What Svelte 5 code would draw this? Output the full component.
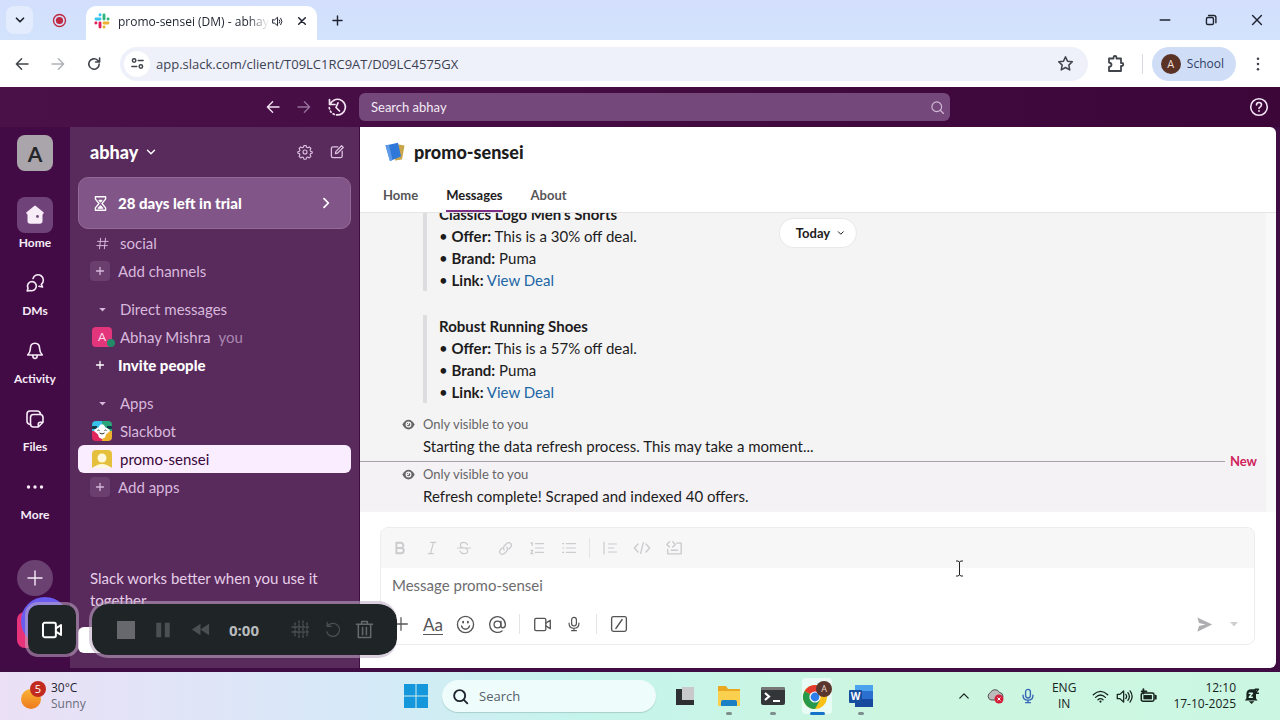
<script>
	let search = '';
	let url = 'app.slack.com/client/T09LC1RC9AT/D09LC4575GX';
	let taskSearch = '';
	let message = '';
	let activeTab = 'Messages';

	const tabs = ['Home', 'Messages', 'About'];

	const rail = [
		{ label: 'Home', icon: 'home' },
		{ label: 'DMs', icon: 'dms' },
		{ label: 'Activity', icon: 'bell' },
		{ label: 'Files', icon: 'files' },
		{ label: 'More', icon: 'more' }
	];

	const deals = [
		{ name: "Classics Logo Men's Shorts", offer: 'This is a 30% off deal.', brand: 'Puma' },
		{ name: 'Robust Running Shoes', offer: 'This is a 57% off deal.', brand: 'Puma' }
	];

	const notices = [
		{ text: 'Starting the data refresh process. This may take a moment...', isNew: false },
		{ text: 'Refresh complete! Scraped and indexed 40 offers.', isNew: true }
	];

	// all on a 20x20 grid, stroked with currentColor
	const icons = {
		chevronDown: '<path d="M5 7.5l5 5 5-5"/>',
		chevronUp: '<path d="M4 13l6-6 6 6"/>',
		chevronRight: '<path d="M7.5 4.5L13 10l-5.5 5.5"/>',
		caret: '<path d="M5 7.5h10l-5 5.5z" fill="currentColor" stroke="none"/>',
		record:
			'<circle cx="10" cy="10" r="8"/><circle cx="10" cy="10" r="4.8" fill="currentColor" stroke="none"/>',
		speaker:
			'<path d="M2.5 7.5v5h3l4.5 4V3.500l-4.500 4zM12.800 7.500q2 2.500 0 5M15 5q4 5 0 10"/>',
		close: '<path d="M4.500 4.500l11 11M15.500 4.500l-11 11"/>',
		plus: '<path d="M10 3v14M3 10h14"/>',
		minimize: '<path d="M4 10h12"/>',
		restore:
			'<rect x="3.500" y="6.500" width="10" height="10" rx="2"/><path d="M6.500 3.500H14a3 3 0 0 1 3 3V14"/>',
		left: '<path d="M17.500 10H3M9.500 3.500L3 10l6.500 6.500"/>',
		right: '<path d="M2.500 10H17M10.500 3.500L17 10l-6.500 6.500"/>',
		reload: '<path d="M16.500 10A6.500 6.500 0 1 1 14.500 5.300L17 7.500M17 2.500v5h-5"/>',
		site:
			'<circle cx="5.500" cy="6" r="2.300"/><path d="M11 6h6.500M2.500 14H9"/><circle cx="14.500" cy="14" r="2.300"/>',
		star: '<path d="M10 2.200l2.400 5.100 5.600.7-4.100 3.900 1.100 5.600-5-2.800-5 2.800 1.100-5.600L2 8l5.600-.7z"/>',
		puzzle:
			'<path d="M3 4.500h4.500v-1a1.500 1.500 0 0 1 3 0v1h4.500V9h.8a1.500 1.500 0 0 1 0 3H15v5H3v-4q2.500-.5 2.500-2.200T3 8.500z"/>',
		dots:
			'<g fill="currentColor" stroke="none"><circle cx="10" cy="3.500" r="1.600"/><circle cx="10" cy="10" r="1.600"/><circle cx="10" cy="16.500" r="1.600"/></g>',
		history: '<path d="M2.500 2.500v5H8M3.200 7.500A7.800 7.800 0 1 1 9.500 17.800M11 5.800L9 10.500l3.500 3.500"/><path d="M2.300 10.500q.8 5.500 5.200 7" stroke-dasharray="1.200 2.600"/>',
		search: '<circle cx="9" cy="9" r="6.500"/><path d="M14 14l4 4"/>',
		help:
			'<circle cx="10" cy="10" r="8.300"/><path d="M7.500 8q0-2.500 2.500-2.500T12.500 8q0 1-1.200 1.800T10 11.500"/><circle cx="10" cy="14" r=".9" fill="currentColor" stroke="none"/>',
		gear:
			'<circle cx="10" cy="10" r="2.500"/><path d="M8.600 2h2.800l.5 2 1.600.7 1.900-1.100 2 2-1.100 1.900.7 1.600 2 .5v1.800l-2 .5-.7 1.600 1.100 1.900-2 2-1.900-1.100-1.600.7-.5 2H8.600l-.5-2-1.600-.7-1.900 1.100-2-2 1.100-1.900-.7-1.600-2-.5V9.600l2-.5.7-1.600-1.100-1.900 2-2 1.900 1.100L8.100 4z"/>',
		compose:
			'<path d="M11 3.500H5a2 2 0 0 0-2 2V15a2 2 0 0 0 2 2h9.500a2 2 0 0 0 2-2V9"/><path d="M8 12l.7-2.800 7-7 2.100 2.100-7 7z"/>',
		hourglass:
			'<path d="M4 2h12v2.800L11.700 10l4.300 5.200V18H4v-2.800L8.300 10 4 4.800z"/><path d="M7.500 15.500L10 13l2.500 2.500zM8.500 6.500h3L10 8z" fill="currentColor"/>',
		hash: '<path d="M7.500 3L6 17M14 3l-1.500 14M3.500 7.200h14M2.500 12.800h14"/>',
		home:
			'<path d="M10 1.500l8 6.300-1.300 1.600V16a2 2 0 0 1-2 2H5.300a2 2 0 0 1-2-2V9.400L2 7.800z" fill="currentColor"/><circle cx="12.500" cy="11.500" r="1.400" fill="#6f4a78" stroke="none"/>',
		dms:
			'<path d="M8 5.500A5.300 5.300 0 1 1 16.300 11.300l1.200 2.700-3.500-.7"/><path d="M7 8.500a4.600 4.600 0 1 1-1.600 9l-3.200.5.800-2.800A4.600 4.600 0 0 1 7 8.500z"/>',
		bell:
			'<path d="M10 2.200c-3.200 0-4.600 2.300-4.600 5.200 0 3-1 4.600-2.700 6.600h14.600c-1.700-2-2.700-3.600-2.700-6.600 0-2.900-1.400-5.200-4.600-5.200zM7.800 14.500q0 3 2.200 3t2.200-3"/>',
		files:
			'<path d="M5.500 15.500Q2 15 2 12V5a3 3 0 0 1 3-3h7q3 0 3.500 3"/><path d="M8.500 5.500h6.500a3 3 0 0 1 3 3v4.800L13.300 18H8.500a3 3 0 0 1-3-3V8.500a3 3 0 0 1 3-3zM17.800 13.300h-2.500a2 2 0 0 0-2 2v2.500"/>',
		more:
			'<g fill="currentColor" stroke="none"><circle cx="3.500" cy="10" r="1.700"/><circle cx="10" cy="10" r="1.700"/><circle cx="16.500" cy="10" r="1.700"/></g>',
		eye:
			'<path d="M.5 10Q4.500 2.500 10 2.500t9.500 7.500q-4 7.500-9.500 7.500T.5 10z" fill="currentColor" stroke="none"/><circle cx="10" cy="10" r="3.600" stroke="#f4f4f4" stroke-width="1.800"/><path d="M10 7v3H7" stroke="#f4f4f4"/>',
		bold: '<path d="M5.500 3.500h5.500a3.200 3.200 0 0 1 0 6.500H5.500zM5.500 10h6.500a3.300 3.300 0 0 1 0 6.500H5.500z"/>',
		italic: '<path d="M8.500 3h6M5.500 17h6M12 3L8 17"/>',
		strike: '<path d="M14.500 6Q13 3 10 3 5.500 3 5.500 6.300T10 10t4.500 3.700T10 17q-3.500 0-5-3M2 10h16"/>',
		link:
			'<path d="M8.500 11.500q-2-2.500.5-5l2.500-2.500q2.500-2 4.500 0t0 4.500L14 10.500M11.500 8.500q2 2.500-.5 5L8.500 16q-2.500 2-4.500 0t0-4.500L6 9.500"/>',
		ordered: '<path d="M8 4.500h10M8 10h10M8 15.500h10M2.500 4l1.500-.8V7M2.500 13h2.200L2.500 17h2.500"/>',
		bullets: '<path d="M7 4.500h11M7 10h11M7 15.500h11M2 4.500h1.500M2 10h1.500M2 15.500h1.500"/>',
		quote: '<path d="M2.500 2.500v15M8 5h10M8 10h7M8 15h10"/>',
		code: '<path d="M5.500 5.500L1.500 10l4 4.500M14.500 5.500l4 4.500-4 4.500M11.500 4l-3 12"/>',
		codeblock: '<path d="M5 3L2 6l3 3M8.500 3l3 3-3 3M13 4.500h5v12H3v-5M7 12.500h7"/>',
		smile:
			'<circle cx="10" cy="10" r="8.500"/><path d="M5.800 11.500q1 3.500 4.200 3.500t4.200-3.500"/><path d="M7.500 7v1M12.500 7v1" stroke-width="2"/>',
		at:
			'<circle cx="10" cy="10" r="3.600"/><path d="M13.600 6.500v4.700q0 2.200 2 2.200 2.700 0 2.700-3.400A8.300 8.300 0 1 0 14.800 16.800"/>',
		video:
			'<rect x="1.800" y="3.500" width="11.700" height="13" rx="1.500"/><path d="M13.500 8.500l4.700-3v9l-4.700-3"/>',
		mic: '<rect x="7" y="1.800" width="6" height="10.700" rx="3"/><path d="M3.800 9q0 6.300 6.200 6.300T16.200 9M10 15.300v3M7 18.300h6"/>',
		slash: '<rect x="1.800" y="1.800" width="16.400" height="16.400" rx="2"/><path d="M13.500 5l-7 10"/>',
		send: '<path d="M2.500 2.500l15.500 7.500-15.500 7.500 1.700-6L11 10 4.200 8.500z" fill="currentColor" stroke="none"/>',
		wifi:
			'<path d="M1.500 8q8.500-8 17 0M4.200 11q5.800-5.500 11.600 0M7 13.800q3-2.600 6 0"/><circle cx="10" cy="16" r="1.300" fill="currentColor" stroke="none"/>',
		volume: '<path d="M1.500 7.500v5h3L9 16.500v-13l-4.500 4zM11.500 7.500q2 2.500 0 5M14 5.500q3.500 4.500 0 9M16.500 3.500q5 6.500 0 13"/>',
		battery:
			'<rect x="1.500" y="6" width="15" height="9.500" rx="2"/><rect x="4" y="8.300" width="10" height="5" fill="currentColor" stroke="none"/><path d="M18.500 9v3.500M4 1.500v5M2 4h5.500" stroke-width="2.200"/>',
		snooze:
			'<path d="M9 1.500q-6 0-6 6V13l-2 2.500h16L15 13V1.500zM6 16.500h7L9.500 20z" fill="currentColor" stroke="none"/><path d="M6.500 6.500h4l-4 5h4" stroke="#cdf6e3"/><path d="M14 1.500h4l-4 5h4"/>',
		pause:
			'<path d="M2.500 2h5.500v16H2.500zM12 2h5.500v16H12z" fill="currentColor" stroke="none"/>',
		rewind: '<path d="M10 4v12L1 10zM19 4v12l-9-6z" fill="currentColor" stroke="none"/>',
		grid: '<path d="M4 3v14M8 1v18M12 1v18M16 3v14M1 7h18M1 12h18" stroke-dasharray="2 1.600"/>',
		restart: '<path d="M4.500 5A7.300 7.300 0 1 1 3 12M3.500 1.500V6H8"/>',
		trash: '<path d="M1.500 4.500h17M7 4.500v-3h6v3M3.500 4.500v14h13v-14M8 8v7.500M12 8v7.500"/>'
	};
</script>

{#snippet icon(name, size = 18, weight = 1.5)}
	<svg
		width={size}
		height={size}
		viewBox="0 0 20 20"
		fill="none"
		stroke="currentColor"
		stroke-width={weight}
		stroke-linecap="round"
		stroke-linejoin="round"
		aria-hidden="true">{@html icons[name]}</svg
	>
{/snippet}

<div class="screen">
	<header class="tabstrip">
		<button class="tab-search" aria-label="Search tabs">{@render icon('chevronDown', 14, 2.5)}</button>
		<span class="record">{@render icon('record', 15, 1.8)}</span>
		<div class="browser-tab">
			<svg width="16" height="16" viewBox="0 0 20 20" aria-hidden="true">
				<g fill="none" stroke-width="3.600" stroke-linecap="round">
					<path d="M2.500 7.500h5M7.500 2.200v.3" stroke="#36c5f0" />
					<path d="M12.500 2.500v5M17.500 7.500h.2" stroke="#2eb67d" />
					<path d="M12.500 12.500h5M12.500 17.500v.2" stroke="#ecb22e" />
					<path d="M7.500 12.500v5M2.300 12.500h.2" stroke="#e01e5a" />
				</g>
			</svg>
			<span class="tab-title">promo-sensei (DM) - abhay</span>
			<button aria-label="Mute tab">{@render icon('speaker', 13, 1.5)}</button>
			<button aria-label="Close tab">{@render icon('close', 12, 2.5)}</button>
		</div>
		<button class="new-tab" aria-label="New tab">{@render icon('plus', 13, 2.2)}</button>
		<div class="window-controls">
			<button aria-label="Minimize">{@render icon('minimize', 16, 1.8)}</button>
			<button aria-label="Restore">{@render icon('restore', 14, 2)}</button>
			<button aria-label="Close">{@render icon('close', 16, 1.8)}</button>
		</div>
	</header>

	<div class="toolbar">
		<button aria-label="Back">{@render icon('left', 16, 1.9)}</button>
		<button class="off" aria-label="Forward">{@render icon('right', 16, 1.9)}</button>
		<button aria-label="Reload">{@render icon('reload', 16, 2)}</button>
		<div class="omnibox">
			<button class="site" aria-label="Site information">{@render icon('site', 15, 2)}</button>
			<input type="text" bind:value={url} aria-label="Address" />
			<button aria-label="Bookmark this tab">{@render icon('star', 17, 1.8)}</button>
		</div>
		<button class="extensions" aria-label="Extensions">{@render icon('puzzle', 20, 1.8)}</button>
		<button class="profile"><span>A</span>School</button>
		<button aria-label="Menu">{@render icon('dots', 16)}</button>
	</div>

	<div class="slack">
		<div class="topbar">
			<nav class="history" aria-label="History">
				<button aria-label="Back">{@render icon('left', 16, 1.7)}</button>
				<button class="dim" aria-label="Forward">{@render icon('right', 16, 1.7)}</button>
				<button aria-label="Recent">{@render icon('history', 20, 1.7)}</button>
			</nav>
			<div class="searchbar">
				<input type="text" bind:value={search} placeholder="Search abhay" aria-label="Search abhay" />
				<button aria-label="Search">{@render icon('search', 15, 1.5)}</button>
			</div>
			<button class="help" aria-label="Help">{@render icon('help', 20, 1.6)}</button>
		</div>

		<div class="workspace">
			<nav class="rail" aria-label="Workspace">
				<button class="team" aria-label="abhay">A</button>
				{#each rail as item}
					<button class="rail-item" class:active={item.label === 'Home'}>
						<span class="tile">{@render icon(item.icon, 20, 1.6)}</span>
						{item.label}
					</button>
				{/each}
				<button class="create" aria-label="Create new">{@render icon('plus', 20, 1.4)}</button>
				<span class="me"></span>
			</nav>

			<aside class="sidebar">
				<div class="side-head">
					<button class="team-name">abhay {@render icon('chevronDown', 14, 2)}</button>
					<button class="tool" aria-label="Settings">{@render icon('gear', 16, 1.4)}</button>
					<button class="tool" aria-label="New message">{@render icon('compose', 16, 1.6)}</button>
				</div>

				<button class="trial">
					{@render icon('hourglass', 17, 1.6)}
					<span>28 days left in trial</span>
					{@render icon('chevronRight', 16, 2.2)}
				</button>

				<ul>
					<li><button><span class="lead">{@render icon('hash', 15, 1.3)}</span>social</button></li>
					<li>
						<button class="add"><span class="lead box">{@render icon('plus', 10, 2.6)}</span>Add channels</button>
					</li>
				</ul>
				<ul>
					<li><button><span class="lead">{@render icon('caret', 13)}</span>Direct messages</button></li>
					<li>
						<button>
							<span class="lead"><span class="person">A</span></span>Abhay Mishra <small>you</small>
						</button>
					</li>
					<li>
						<button class="add invite"><span class="lead">{@render icon('plus', 10, 2.6)}</span>Invite people</button>
					</li>
				</ul>
				<ul>
					<li><button><span class="lead">{@render icon('caret', 13)}</span>Apps</button></li>
					<li>
						<button>
							<span class="lead">
								<svg class="bot" width="20" height="20" viewBox="0 0 20 20" aria-hidden="true">
									<path d="M0 0h10v10H0z" fill="#37c0ea" />
									<path d="M10 0h10v10H10z" fill="#2ba57a" />
									<path d="M0 10h10v10H0z" fill="#e0265c" />
									<path d="M10 10h10v10H10z" fill="#ecb22e" />
									<path d="M0 5h5v3H0zM20 5h-5v3h5z" fill="#123f4c" />
									<path d="M8 4q2-1.500 4 0l1.500 2.500Q18 8 18 10l-4 3.500-1 3L10 18l-3-1.500-1-3L2 10q0-2 4.500-3.500z" fill="#fff" />
									<path d="M5.500 9.500q1-1 2 0M12.500 9.500q1-1 2 0M7.500 12q2.500 2 5 0" stroke="#333" fill="none" />
								</svg>
							</span>Slackbot
						</button>
					</li>
					<li>
						<button class="selected">
							<span class="lead">
								<svg width="20" height="18" viewBox="0 0 20 18" aria-hidden="true">
									<path d="M0 18V4a4 4 0 0 1 4-4h12a4 4 0 0 1 4 4v14q-3-3-10-3T0 18z" fill="#e5c03d" />
									<circle cx="10" cy="8" r="4.500" fill="#fff8dd" />
									<path d="M3 18q1-4 7-4t7 4z" fill="#fff8dd" />
								</svg>
							</span>promo-sensei
						</button>
					</li>
					<li><button class="add"><span class="lead box">{@render icon('plus', 10, 2.6)}</span>Add apps</button></li>
				</ul>

				<div class="together">
					<p>Slack works better when you use it together.</p>
					<button aria-label="Invite teammates"></button>
				</div>
			</aside>

			<main>
				<div class="chat-head">
					<h1>
						<svg width="20" height="20" viewBox="0 0 20 20" aria-hidden="true">
							<path d="M11 2l8.500 1.500-2.500 14-7 1z" fill="#c9a64a" />
							<path d="M.5 3.500L13 .8l3 13.700L5 19z" fill="#2f77d8" />
							<path d="M.5 3.500L4 2.800 7.500 18 5 19z" fill="#5d9bea" />
						</svg>
						promo-sensei
					</h1>
					<nav class="tabs" aria-label="App tabs">
						{#each tabs as tab}
							<button class:active={tab === activeTab} on:click={() => (activeTab = tab)}>{tab}</button>
						{/each}
					</nav>
				</div>

				<section class="messages">
					<button class="today">Today {@render icon('chevronDown', 10, 2)}</button>
					{#each deals as deal}
						<div class="deal">
							<b>{deal.name}</b>
							<p>• <b>Offer:</b> {deal.offer}</p>
							<p>• <b>Brand:</b> {deal.brand}</p>
							<p>• <b>Link:</b> <a href="#deal">View Deal</a></p>
						</div>
					{/each}
					{#each notices as notice}
						<article class:fresh={notice.isNew}>
							{#if notice.isNew}
								<div class="divider"><span>New</span></div>
							{/if}
							<p class="only">{@render icon('eye', 13)}Only visible to you</p>
							<p>{notice.text}</p>
						</article>
					{/each}
				</section>

				<div class="composer">
					<div class="editor">
						<div class="formatting">
							<button aria-label="Bold">{@render icon('bold', 16, 2.4)}</button>
							<button aria-label="Italic">{@render icon('italic', 16)}</button>
							<button aria-label="Strikethrough">{@render icon('strike', 16)}</button>
							<i class="clear"></i>
							<button aria-label="Link">{@render icon('link', 17)}</button>
							<button aria-label="Ordered list">{@render icon('ordered', 16)}</button>
							<button aria-label="Bulleted list">{@render icon('bullets', 16)}</button>
							<i></i>
							<button aria-label="Blockquote">{@render icon('quote', 16)}</button>
							<button aria-label="Code">{@render icon('code', 18)}</button>
							<button aria-label="Code block">{@render icon('codeblock', 18)}</button>
						</div>
						<textarea
							rows="1"
							bind:value={message}
							placeholder="Message promo-sensei"
							aria-label="Message promo-sensei"
						></textarea>
						<div class="actions">
							<button aria-label="Attach">{@render icon('plus', 18, 1.4)}</button>
							<button class="aa" aria-label="Hide formatting">Aa</button>
							<button aria-label="Emoji">{@render icon('smile', 19, 1.4)}</button>
							<button aria-label="Mention">{@render icon('at', 19, 1.4)}</button>
							<i></i>
							<button aria-label="Record video">{@render icon('video', 19, 1.4)}</button>
							<button aria-label="Record audio">{@render icon('mic', 16, 1.5)}</button>
							<i></i>
							<button aria-label="Shortcuts">{@render icon('slash', 18, 1.5)}</button>
							<div class="sending">
								<button aria-label="Send">{@render icon('send', 19)}</button>
								<button class="later" aria-label="Schedule">{@render icon('caret', 16)}</button>
							</div>
						</div>
					</div>
				</div>
			</main>
		</div>
	</div>

	<footer class="taskbar">
		<button class="weather">
			<span class="sun"><span>5</span></span>
			<span class="lines">30°C<em>Sunny</em></span>
		</button>
		<div class="dock">
			<button aria-label="Start">
				<svg width="24" height="24" viewBox="0 0 24 24" fill="#1597dc" aria-hidden="true">
					<path d="M0 0h11.500v11.500H0zM12.500 0H24v11.500H12.500zM0 12.500h11.500V24H0zM12.500 12.500H24V24H12.500z" />
				</svg>
			</button>
			<div class="task-search">
				{@render icon('search', 17, 2.2)}
				<input type="text" bind:value={taskSearch} placeholder="Search" aria-label="Search" />
			</div>
			<button class="app" aria-label="Task view">
				<svg width="24" height="24" viewBox="0 0 24 24" aria-hidden="true">
					<path d="M3 5h6v11h12v5H3z" fill="#2e2f31" />
					<path d="M9 3h12v13H9z" fill="#c9c9cc" />
				</svg>
			</button>
			<button class="app open" aria-label="File Explorer">
				<svg width="24" height="24" viewBox="0 0 24 24" aria-hidden="true">
					<path d="M1 2h8l2 3h12v17H1z" fill="#e9a820" />
					<path d="M1 7h22v15H1z" fill="#fcd04f" />
					<path d="M4 22v-4q0-2 2-2h12q2 0 2 2v4z" fill="#1a7fc4" />
				</svg>
			</button>
			<button class="app open" aria-label="Terminal">
				<svg width="24" height="24" viewBox="0 0 24 24" aria-hidden="true">
					<rect x="0" y="3" width="24" height="18" rx="2" fill="#333638" />
					<path d="M0 5q0-2 2-2h20q2 0 2 2v1H0z" fill="#777" />
					<path d="M4 9l4 3.500L4 16M12 17h7" stroke="#fff" stroke-width="2.200" fill="none" />
				</svg>
			</button>
			<button class="app open current" aria-label="Chrome">
				<svg width="30" height="30" viewBox="0 0 30 30" aria-hidden="true">
					<circle cx="13" cy="16" r="12" fill="#fbc116" />
					<path d="M13 16L2.600 10A12 12 0 0 1 23.400 10z" fill="#e33b2e" />
					<path d="M2.600 10A12 12 0 0 0 13 28l5-9z" fill="#27994a" />
					<circle cx="13" cy="16" r="5.600" fill="#fff" />
					<circle cx="13" cy="16" r="4.400" fill="#2f7de9" />
					<circle cx="22" cy="8" r="8" fill="#5a372d" />
					<text x="22" y="11" text-anchor="middle" font-size="9" fill="#e8d8d0">A</text>
				</svg>
			</button>
			<button class="app open" aria-label="Word">
				<svg width="24" height="24" viewBox="0 0 24 24" aria-hidden="true">
					<rect x="6" y="1" width="18" height="22" rx="1" fill="#2b6fd0" />
					<path d="M6 1h18v6H6z" fill="#4ba3ee" />
					<path d="M6 15h18v8H6z" fill="#174a9e" />
					<rect x="0" y="6" width="13" height="13" rx="1" fill="#174f9f" />
					<text x="6.500" y="16" text-anchor="middle" font-size="10" font-weight="700" fill="#fff">W</text>
				</svg>
			</button>
		</div>
		<div class="tray">
			<button aria-label="Show hidden icons">{@render icon('chevronUp', 14, 1.8)}</button>
			<button aria-label="OneDrive">
				<svg width="17" height="16" viewBox="0 0 17 16" aria-hidden="true">
					<path d="M4 12a4 4 0 0 1-.5-7.500 5 5 0 0 1 9 0A3.800 3.800 0 0 1 13 12z" fill="#bbb" stroke="#555" />
					<circle cx="12" cy="11" r="4.500" fill="#d31f3a" />
					<path d="M10.500 9.500l3 3M13.500 9.500l-3 3" stroke="#fff" />
				</svg>
			</button>
			<button class="tray-mic" aria-label="Microphone in use">{@render icon('mic', 16, 1.7)}</button>
			<button class="lang">ENG<br />IN</button>
			<button class="net" aria-label="Network, sound and battery">
				{@render icon('wifi', 17, 1.5)}
				{@render icon('volume', 17, 1.5)}
				{@render icon('battery', 17, 1.8)}
			</button>
			<button class="clock">12:10<br />17-10-2025</button>
			<button aria-label="Notifications">{@render icon('snooze', 16, 1.8)}</button>
		</div>
	</footer>

	<div class="bubble"></div>
	<div class="recorder">
		<button class="camera" aria-label="Camera">{@render icon('video', 22, 1.8)}</button>
		<div class="controls">
			<button class="stop" aria-label="Stop"><span></span></button>
			<button aria-label="Pause">{@render icon('pause', 18)}</button>
			<button aria-label="Rewind">{@render icon('rewind', 19)}</button>
			<time>0:00</time>
			<button aria-label="Blur">{@render icon('grid', 20, 1.4)}</button>
			<button class="tight" aria-label="Restart">{@render icon('restart', 18, 1.4)}</button>
			<button class="tight delete" aria-label="Delete">{@render icon('trash', 19, 1.6)}</button>
		</div>
	</div>
	<svg class="pointer" width="9" height="17" viewBox="0 0 9 17" aria-hidden="true">
		<path d="M1 1h2l1.500 1L6 1h2M4.500 2v13M1 16h2l1.500-1L6 16h2" fill="none" stroke="#222" />
	</svg>
</div>

<style>
	:global(body) {
		margin: 0;
	}

	.screen,
	.screen * {
		box-sizing: border-box;
	}

	.screen {
		position: relative;
		display: flex;
		flex-direction: column;
		height: 100vh;
		overflow: hidden;
		font-family: 'Open Sans', 'Noto Sans', sans-serif;
		font-size: 12px;
		color: #1f2430;
	}

	button,
	input,
	textarea {
		font: inherit;
		color: inherit;
		background: none;
		border: 0;
		padding: 0;
		margin: 0;
		min-width: 0;
		outline: none;
	}

	button {
		display: flex;
		align-items: center;
		justify-content: center;
		flex-shrink: 0;
		cursor: pointer;
	}

	svg {
		display: block;
		flex-shrink: 0;
	}

	p,
	ul,
	h1 {
		margin: 0;
		padding: 0;
	}

	/* browser */
	.tabstrip {
		display: flex;
		align-items: center;
		height: 40px;
		flex-shrink: 0;
		padding-left: 6px;
		background: linear-gradient(#d3dffd, #d3e3fc);
	}

	.tab-search {
		width: 27px;
		height: 28px;
		border-radius: 8px;
		background: #e3ecfd;
	}

	.record {
		margin: 0 19px;
		color: #c0283f;
	}

	.browser-tab {
		display: flex;
		align-items: center;
		width: 231px;
		height: 34px;
		align-self: flex-end;
		padding: 0 9px 4px 8px;
		border-radius: 10px 10px 0 0;
		background: #fff;
	}

	.tab-title {
		flex: 1;
		min-width: 0;
		margin: 0 2px 0 8px;
		overflow: hidden;
		white-space: nowrap;
		mask-image: linear-gradient(to right, #000 86%, transparent);
	}

	.browser-tab button + button {
		margin-left: 12px;
	}

	.new-tab {
		margin-left: 14px;
	}

	.window-controls {
		display: flex;
		margin-left: auto;
	}

	.window-controls button {
		width: 46px;
		height: 40px;
	}

	.toolbar {
		display: flex;
		align-items: center;
		height: 47px;
		flex-shrink: 0;
		gap: 20px;
		padding: 0 14px;
		background: #fff;
		color: #41444b;
	}

	.toolbar .off {
		color: #b0b3ba;
	}

	.omnibox {
		display: flex;
		align-items: center;
		flex: 1;
		height: 34px;
		margin-left: -2px;
		padding: 0 14px 0 4px;
		border-radius: 17px;
		background: #eef0fa;
	}

	.site {
		width: 26px;
		height: 26px;
		border-radius: 50%;
		background: #fff;
	}

	.omnibox input {
		flex: 1;
		margin-left: 6px;
		font-size: 13px;
		color: #3c4252;
	}

	.extensions {
		margin-left: -2px;
		padding-right: 16px;
		border-right: 1px solid #d9dbe2;
	}

	.profile {
		gap: 6px;
		height: 34px;
		margin: 0 -6px 0 -11px;
		padding: 0 12px 0 9px;
		border-radius: 17px;
		background: #d0ddf6;
		color: #2e3f66;
	}

	.profile span {
		width: 20px;
		border-radius: 50%;
		background: #5a3326;
		color: #f0ddd5;
		font-size: 11px;
		line-height: 20px;
	}

	/* slack shell */
	.slack {
		display: flex;
		flex-direction: column;
		flex: 1;
		min-height: 0;
		background: #3f0c43;
		font-family: Lato, 'Noto Sans', sans-serif;
		font-size: 15px;
		color: #e6cfe8;
	}

	.topbar {
		display: grid;
		grid-template-columns: 359px minmax(0, 591px) 1fr;
		align-items: center;
		height: 40px;
		flex-shrink: 0;
		background: linear-gradient(to right, #4a1149, #3c0639);
	}

	.history {
		display: flex;
		justify-content: flex-end;
		align-items: center;
		gap: 15px;
		padding-right: 12px;
		color: #f3e3f3;
	}

	.dim {
		color: #96709a;
	}

	.searchbar {
		display: flex;
		align-items: center;
		height: 28px;
		padding: 0 5px 0 12px;
		border-radius: 6px;
		background: #74487a;
		color: #d5bcd9;
	}

	.searchbar input {
		flex: 1;
		font-size: 13px;
	}

	.searchbar input::placeholder {
		color: #f3e8f5;
	}

	.help {
		justify-self: end;
		margin-right: 11px;
		color: #f3e3f3;
	}

	.workspace {
		display: flex;
		flex: 1;
		min-height: 0;
		padding: 0 4px 4px 0;
	}

	.rail {
		display: flex;
		flex-direction: column;
		align-items: center;
		width: 70px;
		flex-shrink: 0;
		padding-top: 8px;
		background: #430b46;
		color: #f7ecf7;
	}

	.team {
		width: 36px;
		height: 36px;
		margin-bottom: 26px;
		border-radius: 8px;
		background: #a9a5ab;
		color: #26262a;
		font-size: 21px;
		font-weight: 700;
	}

	.rail-item {
		flex-direction: column;
		height: 68px;
		justify-content: flex-start;
		font-size: 12px;
		font-weight: 700;
		line-height: 20px;
	}

	.tile {
		display: grid;
		place-items: center;
		width: 36px;
		height: 36px;
		border-radius: 8px;
	}

	.active .tile {
		background: #6f427a;
	}

	.create {
		width: 36px;
		height: 36px;
		margin-top: 23px;
		border-radius: 50%;
		background: #6b4172;
	}

	.me {
		width: 36px;
		height: 36px;
		margin-top: 16px;
		border-radius: 8px;
		background: #e8337a;
	}

	.sidebar {
		display: flex;
		flex-direction: column;
		width: 289px;
		flex-shrink: 0;
		padding: 0 8px 15px;
		background: #592a5c;
	}

	.side-head {
		display: flex;
		align-items: center;
		gap: 16px;
		height: 50px;
		padding: 0 6px 0 12px;
		color: #dcc3df;
	}

	.team-name {
		gap: 6px;
		margin-right: auto;
		color: #fff;
		font-size: 18px;
		font-weight: 900;
	}

	.trial {
		gap: 9px;
		height: 52px;
		padding: 0 16px 0 13px;
		border: 1px solid #936a98;
		border-radius: 10px;
		background: #815588;
		color: #fff;
		font-weight: 900;
	}

	.trial span {
		flex: 1;
		text-align: left;
	}

	ul {
		list-style: none;
	}

	ul + ul {
		margin-top: 10px;
	}

	li button {
		width: 100%;
		height: 28px;
		justify-content: flex-start;
		gap: 8px;
		padding-left: 14px;
		border-radius: 6px;
		color: #d8b9dc;
	}

	li small {
		font-size: 15px;
		color: #aa86ae;
	}

	.lead {
		display: grid;
		place-items: center;
		width: 20px;
		height: 20px;
		border-radius: 4px;
	}

	.add {
		gap: 8px;
		padding-left: 12px;
	}

	.box {
		background: #6a3f6e;
	}

	.invite {
		color: #fff;
		font-weight: 900;
	}

	.person {
		position: relative;
		width: 20px;
		border-radius: 4px;
		background: #e2357b;
		color: #fbdbe9;
		font-size: 12px;
		line-height: 20px;
		text-align: center;
	}

	.person::after {
		content: '';
		position: absolute;
		right: -3px;
		bottom: 0;
		width: 8px;
		height: 8px;
		border-radius: 50%;
		background: #238a68;
	}

	.bot {
		border-radius: 4px;
	}

	.selected {
		background: #f9edff;
		color: #39063a;
	}

	.together {
		margin-top: auto;
		line-height: 22px;
	}

	.together p {
		padding: 0 12px;
	}

	.together button {
		width: 100%;
		height: 26px;
		margin-top: 16px;
		border-radius: 6px;
		background: #fff;
	}

	/* conversation */
	main {
		display: flex;
		flex-direction: column;
		flex: 1;
		min-width: 0;
		margin-left: 1px;
		border-radius: 0 6px 6px 0;
		overflow: hidden;
		background: #fff;
		color: #1d1c1d;
	}

	.chat-head {
		flex-shrink: 0;
		border-bottom: 1px solid #e6e4e6;
	}

	h1 {
		display: flex;
		align-items: center;
		gap: 9px;
		height: 50px;
		padding-left: 25px;
		font-size: 18px;
		font-weight: 900;
	}

	.tabs {
		display: flex;
		gap: 28px;
		height: 35px;
		padding-left: 23px;
	}

	.tabs button {
		padding-top: 2px;
		border-bottom: 2px solid transparent;
		font-size: 13px;
		font-weight: 700;
		color: #565557;
	}

	.tabs .active {
		border-color: #7c3085;
		color: #1d1c1d;
	}

	.messages {
		position: relative;
		display: flex;
		flex-direction: column;
		justify-content: flex-end;
		flex: 1;
		min-height: 0;
		padding-bottom: 2px;
		overflow: hidden;
		border-right: 10px solid #f9f9fa;
		background: #f4f4f5;
		line-height: 22px;
	}

	.today {
		position: absolute;
		top: 6px;
		left: calc(50% + 5px);
		z-index: 1;
		gap: 6px;
		height: 28px;
		padding: 0 10px 0 16px;
		border-radius: 14px;
		background: #fff;
		box-shadow: 0 0 0 1px #e8e8e8;
		font-size: 13px;
		font-weight: 700;
		transform: translateX(-50%);
	}

	.deal {
		margin-left: 63px;
		padding-left: 12px;
		border-left: 4px solid #dddcde;
	}

	.deal + .deal {
		margin-top: 24px;
	}

	.deal + article {
		margin-top: 7px;
	}

	.deal a {
		color: #1b66a5;
		text-decoration: none;
	}

	article {
		position: relative;
		padding: 3px 0 3px 63px;
	}

	.fresh {
		background: #f4f2f5;
	}

	.only {
		display: flex;
		align-items: center;
		gap: 8px;
		margin-left: -21px;
		font-size: 13px;
		color: #666567;
	}

	.divider {
		position: absolute;
		inset: -10px 9px auto 0;
		display: flex;
		align-items: center;
		gap: 5px;
		color: #d0235c;
		font-size: 13px;
		font-weight: 700;
	}

	.divider::before {
		content: '';
		flex: 1;
		height: 1px;
		background: #aaa0ac;
	}

	.composer {
		flex-shrink: 0;
		padding: 15px 21px 23px 20px;
	}

	.editor {
		border: 1px solid #ececef;
		border-radius: 8px;
		overflow: hidden;
	}

	.formatting,
	.actions {
		display: flex;
		align-items: center;
		gap: 4px;
		height: 40px;
		padding: 0 6px;
	}

	.formatting button,
	.actions button {
		width: 28px;
		height: 28px;
	}

	.formatting {
		padding: 0 5px;
		background: #f7f7f8;
		color: #cbcacd;
	}

	.editor i {
		width: 1px;
		height: 20px;
		margin: 0 4px;
		background: #e4e4e7;
	}

	.formatting i {
		margin: 0 2px;
	}

	.formatting .clear {
		background: none;
	}

	textarea {
		display: block;
		width: 100%;
		height: 36px;
		padding: 6px 11px;
		line-height: 22px;
		resize: none;
	}

	textarea::placeholder {
		color: #6d6c6f;
	}

	.actions {
		color: #555457;
	}

	.actions .aa {
		font-size: 17px;
		text-decoration: underline;
		text-underline-offset: 3px;
	}

	.sending {
		display: flex;
		margin-left: auto;
		gap: 2px;
		color: #aeadb0;
	}

	.sending .later {
		color: #d0cfd2;
	}

	/* windows */
	.taskbar {
		display: grid;
		grid-template-columns: 1fr auto 1fr;
		align-items: center;
		height: 48px;
		flex-shrink: 0;
		background: linear-gradient(to right, #ebe0f6, #d6e9f8 28%, #c5f4ec 45%, #cdf6e0 70%, #cbf7e2);
	}

	.weather {
		justify-self: start;
		gap: 7px;
		padding-left: 20px;
	}

	.sun {
		position: relative;
		width: 24px;
		height: 26px;
	}

	.sun::before {
		content: '';
		position: absolute;
		left: 1px;
		bottom: 0;
		width: 20px;
		height: 20px;
		border-radius: 50%;
		background: linear-gradient(#f9b435, #ee7a1e);
	}

	.sun span {
		position: absolute;
		top: -2px;
		right: -2px;
		width: 16px;
		border-radius: 50%;
		background: #c22a20;
		color: #fff;
		font-size: 11px;
		line-height: 16px;
	}

	.lines {
		text-align: left;
		line-height: 16px;
	}

	.lines em {
		display: block;
		font-style: normal;
		color: #6a6c7c;
	}

	.dock {
		display: flex;
		align-items: center;
		gap: 14px;
	}

	.task-search {
		display: flex;
		align-items: center;
		gap: 10px;
		width: 214px;
		height: 32px;
		padding: 0 10px;
		border-radius: 16px;
		background: #eefcfb;
		box-shadow: 0 1px 1px #a9cfcb;
	}

	.task-search input {
		flex: 1;
		font-size: 13px;
	}

	.task-search input::placeholder {
		color: #55606a;
	}

	.app {
		position: relative;
		width: 30px;
		height: 36px;
	}

	.open::after {
		content: '';
		position: absolute;
		bottom: -1px;
		width: 6px;
		height: 3px;
		border-radius: 2px;
		background: #7d8f8c;
	}

	.current {
		border-radius: 4px;
		background: #e9fbf5;
	}

	.current::after {
		width: 15px;
		background: #1572c9;
	}

	.tray {
		display: flex;
		align-items: center;
		justify-self: end;
		gap: 16px;
		padding-right: 20px;
		color: #17231f;
		line-height: 16px;
	}

	.tray-mic {
		color: #3565b5;
	}

	.net {
		gap: 7px;
	}

	.clock {
		text-align: right;
	}

	.clock + button {
		margin-left: -8px;
	}

	/* screen recorder, floating over everything */
	.bubble {
		position: absolute;
		left: 21px;
		bottom: 75px;
		width: 48px;
		height: 48px;
		border-radius: 50%;
		background: #6a5cf0;
	}

	.recorder {
		position: absolute;
		left: 25px;
		bottom: 62px;
		display: flex;
		align-items: center;
		gap: 10px;
	}

	.camera,
	.controls {
		border: 3px solid rgba(190, 170, 195, 0.55);
		background: #1f2527;
		background-clip: padding-box;
	}

	.camera {
		width: 54px;
		height: 55px;
		border-radius: 13px;
		color: #fff;
	}

	.controls {
		display: flex;
		align-items: center;
		width: 308px;
		height: 57px;
		padding-left: 25px;
		border-radius: 19px;
		border-right: 0;
		color: #4b5052;
		gap: 19px;
	}

	.stop span {
		width: 18px;
		height: 18px;
		background: #66686e;
	}

	.controls time {
		margin-right: 13px;
		color: #b9bcbe;
		font-size: 15px;
		font-weight: 700;
	}

	.controls .tight {
		margin-left: -6px;
	}

	.controls .delete {
		color: #66696b;
	}

	.pointer {
		position: absolute;
		left: 955px;
		top: 560px;
	}
</style>
